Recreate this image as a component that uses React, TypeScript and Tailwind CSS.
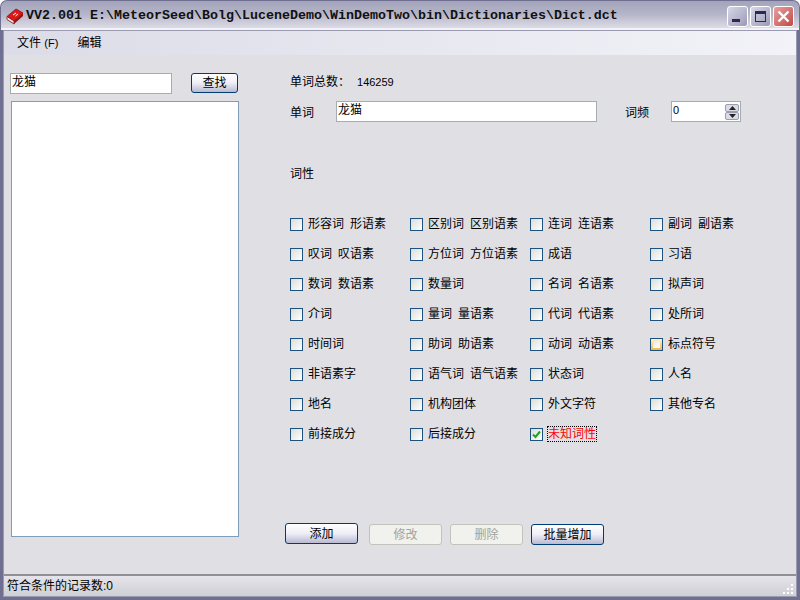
const cjk = "font-['Liberation_Sans','Noto_Sans_CJK_SC',sans-serif]";

const posRows = [
  ["形容词 形语素", "区别词 区别语素", "连词 连语素", "副词 副语素"],
  ["叹词 叹语素", "方位词 方位语素", "成语", "习语"],
  ["数词 数语素", "数量词", "名词 名语素", "拟声词"],
  ["介词", "量词 量语素", "代词 代语素", "处所词"],
  ["时间词", "助词 助语素", "动词 动语素", "标点符号"],
  ["非语素字", "语气词 语气语素", "状态词", "人名"],
  ["地名", "机构团体", "外文字符", "其他专名"],
  ["前接成分", "后接成分", "未知词性"],
];

function PosCheck({ label }: { label: string }) {
  const hover = label === "标点符号";
  const checked = label === "未知词性";
  return (
    <div className="flex h-[30px] items-center">
      <span
        className={
          "flex h-[13px] w-[13px] shrink-0 items-center justify-center border border-[#1c5180] " +
          (hover
            ? "bg-gradient-to-b from-[#fff0cf] to-[#f8b636] p-[2px]"
            : "bg-gradient-to-br from-[#dcdcd7] to-white")
        }
      >
        {hover && <span className="h-full w-full bg-gradient-to-br from-[#e8e8e2] to-white" />}
        {checked && (
          <svg width="9" height="9" viewBox="0 0 9 9">
            <path d="M1 4.5 L3.5 7 L8 1.5" fill="none" stroke="#21a121" strokeWidth="2" />
          </svg>
        )}
      </span>
      <span
        className={
          "ml-[4px] whitespace-pre text-[12px] leading-[14px] [word-spacing:2.7px] " +
          (checked
            ? "-ml-px border border-dotted border-black text-[#ff0000]"
            : "border border-transparent text-black")
        }
      >
        {label}
      </span>
    </div>
  );
}

function ActionButton({ label, disabled }: { label: string; disabled?: boolean }) {
  return disabled ? (
    <button className="h-[21px] w-[73px] rounded-[3px] border border-[#c4c3bb] bg-[#f1f1ed] text-[12px] text-[#a3a39b]">
      {label}
    </button>
  ) : (
    <button className="h-[21px] w-[73px] rounded-[3px] border border-[#003c74] bg-gradient-to-b from-white via-[#eeeef6] to-[#b9b9d2] text-[12px] text-black">
      {label}
    </button>
  );
}

function CaptionButton({ kind }: { kind: "min" | "max" | "close" }) {
  const skin =
    kind === "close"
      ? "from-[#e8a0a0] to-[#c04848]"
      : "from-[#d8d8e6] to-[#9a9ab8]";
  return (
    <span
      className={`relative flex h-[21px] w-[21px] items-center justify-center rounded-[3px] border border-white bg-gradient-to-br ${skin}`}
    >
      {kind === "min" && <span className="absolute bottom-[4px] left-[4px] h-[3px] w-[8px] bg-[#2a2a50]" />}
      {kind === "max" && <span className="h-[11px] w-[11px] border border-t-[3px] border-[#2a2a50]" />}
      {kind === "close" && (
        <svg width="13" height="13" viewBox="0 0 13 13">
          <path d="M1.5 1.5 L11.5 11.5 M11.5 1.5 L1.5 11.5" stroke="white" strokeWidth="2.4" />
        </svg>
      )}
    </span>
  );
}

export default function App() {
  return (
    <div className={`flex h-[600px] w-[800px] flex-col overflow-hidden rounded-t-[7px] bg-[#6f6f92] ${cjk} text-black`}>
      {/* title bar */}
      <div className="mx-[1px] mt-[1px] flex h-[29px] shrink-0 items-center rounded-t-[6px] border-b-2 border-[#f2f2f7] bg-gradient-to-b from-[#a3a3ba] via-[#b6b6ca] to-[#dcdce6] pl-[5px] pr-[5px]">
        <svg width="18" height="17" viewBox="0 0 18 16" className="mt-[3px] shrink-0">
          <path d="M1 8 L10 0.5 L17 4.5 L8 12.5 Z" fill="#e01818" stroke="#801010" strokeWidth="0.8" />
          <path d="M1 8 L8 12.5 L8 15.5 L1 11 Z" fill="#f4e4e4" stroke="#801010" strokeWidth="0.8" />
          <path d="M8 12.5 L17 4.5 L17 7.5 L8 15.5 Z" fill="#a01010" />
          <path d="M7 6.5 L10 4.5 M9.5 7.5 L12 5.5" stroke="#fff" strokeWidth="1" />
        </svg>
        <span className="ml-[2px] mt-[3px] whitespace-pre font-['Liberation_Mono',monospace] text-[13.33px] font-bold text-[#111111]">
          {"VV2.001 E:\\MeteorSeed\\Bolg\\LuceneDemo\\WinDemoTwo\\bin\\Dictionaries\\Dict.dct"}
        </span>
        <div className="ml-auto mt-[3px] flex gap-[2px]">
          <CaptionButton kind="min" />
          <CaptionButton kind="max" />
          <CaptionButton kind="close" />
        </div>
      </div>

      <div className="mx-[3px] mb-[3px] flex min-h-0 flex-1 flex-col border border-[#9a9ab0] bg-[#e0dfe3]">
        {/* menu */}
        <div className="flex h-[24px] shrink-0 items-center gap-[19px] bg-gradient-to-r from-[#dcdce8] to-[#f2f2f8] pb-[1px] pl-[13px] text-[12px]">
          <span>
            文件 <span className="text-[11px]">(F)</span>
          </span>
          <span>编辑</span>
        </div>

        {/* body */}
        <div className="flex min-h-0 flex-1">
          {/* search column */}
          <div className="ml-[6px] flex w-[229px] shrink-0 flex-col pt-[18px]">
            <div className="flex items-start">
              <div className="flex h-[21px] w-[162px] items-center border border-[#a5acb2] bg-white pb-[3px] pl-[1px] text-[12px]">
                龙猫
              </div>
              <button className="ml-[19px] h-[20px] w-[47px] rounded-[3px] border border-[#003c74] bg-gradient-to-b from-white via-[#eeeef6] to-[#b9b9d2] text-[12px]">
                查找
              </button>
            </div>
            <div className="ml-[1px] mt-[7px] h-[436px] w-[228px] border border-[#7f9db9] bg-white" />
          </div>

          {/* word detail */}
          <div className="ml-[51px] flex min-w-0 flex-1 flex-col pt-[20px]">
            <div className="flex h-[14px] items-center text-[12px]">
              <span>单词总数：</span>
              <span className="ml-[7px] text-[11px]">146259</span>
            </div>
            <div className="mt-[12px] flex h-[21px] items-center text-[12px]">
              <span className="mt-[3px] w-[46px]">单词</span>
              <div className="flex h-[21px] w-[261px] items-center border border-[#a5acb2] bg-white pb-[3px] pl-[1px]">龙猫</div>
              <span className="ml-[28px] mt-[3px] w-[46px]">词频</span>
              <div className="flex h-[21px] w-[70px] items-center justify-between border border-[#a5acb2] bg-white pl-[1px] pr-[1px] text-[11px]">
                <span className="pb-[3px]">0</span>
                <span className="flex flex-col">
                  <span className="flex h-[8px] w-[14px] items-center justify-center rounded-[2px] border border-[#9a9ab0] bg-[#dcdce6]">
                    <svg width="7" height="4" viewBox="0 0 7 4"><path d="M3.5 0 L7 4 L0 4 Z" fill="#222" /></svg>
                  </span>
                  <span className="flex h-[8px] w-[14px] items-center justify-center rounded-[2px] border border-[#9a9ab0] bg-[#dcdce6]">
                    <svg width="7" height="4" viewBox="0 0 7 4"><path d="M0 0 L7 0 L3.5 4 Z" fill="#222" /></svg>
                  </span>
                </span>
              </div>
            </div>

            <div className="mt-[45px] text-[12px] leading-[14px]">词性</div>

            <div className="mt-[28px] grid w-[480px] grid-cols-4">
              {posRows.flat().map((label) => (
                <PosCheck key={label} label={label} />
              ))}
            </div>

            <div className="-ml-[5px] mt-[74px] flex items-start gap-[8px]">
              <ActionButton label="添加" />
              <div className="ml-[3px] mt-[1px] flex gap-[8px]">
                <ActionButton label="修改" disabled />
                <ActionButton label="删除" disabled />
                <ActionButton label="批量增加" />
              </div>
            </div>
          </div>
        </div>

        {/* status bar */}
        <div className="relative flex h-[22px] shrink-0 items-center border-t-2 border-[#8f8f96] bg-gradient-to-b from-[#e4e4ea] to-[#cfcfd6] pb-[1px] pl-[3px] text-[12px]">
          符合条件的记录数:0
          <svg width="12" height="12" viewBox="0 0 12 12" className="absolute bottom-[1px] right-[2px]">
            <path d="M9 1h2v2H9zM5 5h2v2H5zM9 5h2v2H9zM1 9h2v2H1zM5 9h2v2H5zM9 9h2v2H9z" fill="#ffffff" />
          </svg>
        </div>
      </div>
    </div>
  );
}
